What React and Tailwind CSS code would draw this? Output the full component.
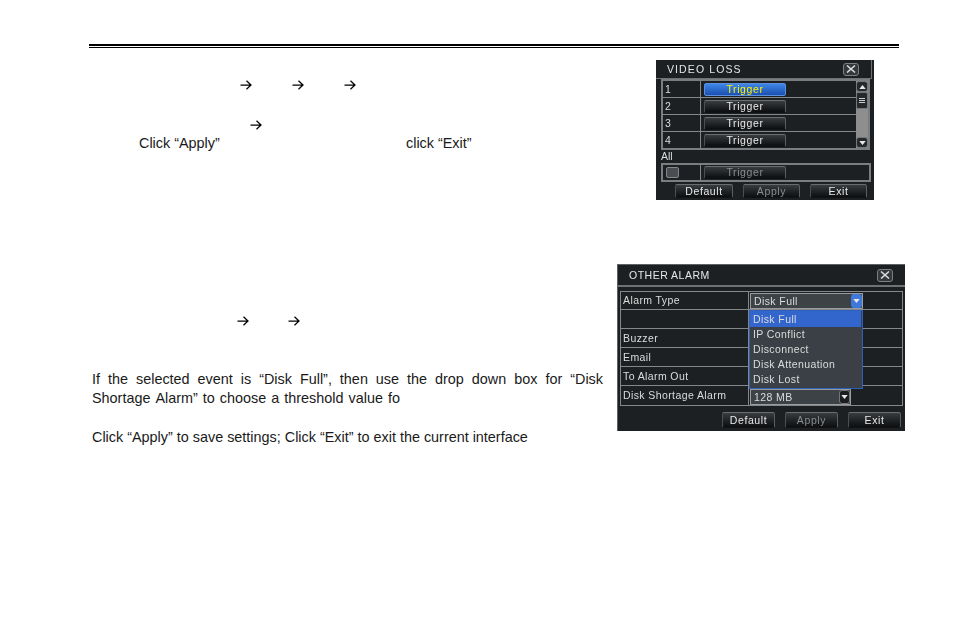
import React from "react";

const Arrow = ({ className }) => (
  <svg viewBox="0 0 12 10" className={`w-[12px] h-[10px] ${className || ""}`} fill="none" stroke="#000" strokeWidth="1.25">
    <path d="M0.5 5H11M6.5 0.8L11 5L6.5 9.2" />
  </svg>
);

const NvrButton = ({ children, active, dim, className }) => (
  <div
    className={`flex items-center justify-center rounded-[2px] border tracking-[0.6px] ${
      active
        ? "border-[#5a8fe0] bg-gradient-to-b from-[#3f86e6] to-[#1c4fb0] text-[#fff200]"
        : "border-t-[#6a6d70] border-l-[#4c4f52] border-r-[#5c5f62] border-b-[#101214] bg-gradient-to-b from-[#3a3d40] to-[#0c0e10]"
    } ${dim ? "text-[#8a8c8e]" : active ? "" : "text-[#e8e8e8]"} ${className || ""}`}
  >
    {children}
  </div>
);

const CloseBtn = () => (
  <div className="w-[16px] h-[13px] flex items-center justify-center border border-[#7d8083] bg-[#35383b] rounded-[3px]">
    <svg viewBox="0 0 10 8" className="w-[10px] h-[8px]" fill="none" stroke="#dcdcdc" strokeWidth="1.5">
      <path d="M1 0.5L9 7.5M9 0.5L1 7.5" />
    </svg>
  </div>
);

const Tri = ({ up }) => (
  <svg viewBox="0 0 8 5" className="w-[7px] h-[4px]">
    <path d={up ? "M0 5L4 0L8 5Z" : "M0 0L4 5L8 0Z"} fill="#e8e8e8" />
  </svg>
);

function VideoLoss() {
  const rows = ["1", "2", "3", "4"];
  return (
    <div className="w-[218px] h-[140px] bg-[#1d2023] text-[#dcdcdc] text-[10.5px] leading-none flex flex-col px-[5px] blur-[0.3px]">
      <div className="h-[19px] flex items-center justify-between pl-[11px] pr-[12px] border-b border-r border-[#6f7275] -ml-[5px] -mr-[3px] shrink-0">
        <span className="tracking-[1.1px] text-[10.5px] text-[#e6e6e6]">VIDEO LOSS</span>
        <CloseBtn />
      </div>
      <div className="h-[71px] w-[209px] border-2 border-[#7b7e81] flex shrink-0">
        <div className="flex-1 flex flex-col">
          {rows.map((r, i) => (
            <div key={r} className={`flex-1 flex items-center ${i < 3 ? "border-b border-[#85888a]" : ""}`}>
              <div className="w-[38px] h-full pl-[2px] flex items-center border-r border-[#85888a]">{r}</div>
              <NvrButton active={i === 0} className="ml-[3px] w-[82px] h-[13px]">Trigger</NvrButton>
            </div>
          ))}
        </div>
        <div className="w-[12px] bg-[#8e8e8e] flex flex-col">
          <div className="h-[11px] bg-[#26292c] border border-[#777] rounded-[3px] flex items-center justify-center"><Tri up /></div>
          <div className="h-[17px] bg-[#26292c] border border-[#777] rounded-[2px] flex flex-col gap-[1px] items-center justify-center">
            <span className="w-[6px] h-px bg-[#ccc]" />
            <span className="w-[6px] h-px bg-[#ccc]" />
            <span className="w-[6px] h-px bg-[#ccc]" />
          </div>
          <div className="h-[11px] mt-auto bg-[#26292c] border border-[#777] rounded-[3px] flex items-center justify-center"><Tri /></div>
        </div>
      </div>
      <div className="h-[13px] flex items-center">All</div>
      <div className="h-[19px] w-[210px] border-2 border-[#7b7e81] flex items-center shrink-0">
        <div className="w-[38px] h-full flex items-center pl-[3px] border-r border-[#85888a]">
          <span className="w-[13px] h-[11px] rounded-[2px] bg-[#4a4e52] border border-[#85888a]" />
        </div>
        <NvrButton dim className="ml-[3px] w-[82px] h-[13px]">Trigger</NvrButton>
      </div>
      <div className="flex mt-[2px] ml-[14px] gap-[10px]">
        <NvrButton className="w-[58px] h-[14px]">Default</NvrButton>
        <NvrButton dim className="w-[57px] h-[14px]">Apply</NvrButton>
        <NvrButton className="w-[57px] h-[14px]">Exit</NvrButton>
      </div>
    </div>
  );
}

function OtherAlarm() {
  const labels = [
    ["Alarm Type", "h-[18px]"],
    ["", "h-[19px]"],
    ["Buzzer", "h-[19px]"],
    ["Email", "h-[19px]"],
    ["To Alarm Out", "h-[19px]"],
    ["Disk Shortage Alarm", "h-[19px]"],
  ];
  return (
    <div className="w-[288px] h-[167px] bg-[#1d2023] text-[#dcdcdc] text-[10.5px] leading-none tracking-[0.4px] flex flex-col pl-[2px] pr-[3px] border-t border-l border-[#5f6265] blur-[0.3px]">
      <div className="h-[22px] -ml-[2px] -mr-[3px] flex items-center justify-between pl-[11px] pr-[12px] border-b-2 border-[#6f7275] shrink-0">
        <span className="tracking-[0.5px] text-[10.5px] text-[#e6e6e6]">OTHER ALARM</span>
        <CloseBtn />
      </div>
      <div className="relative mt-[4px] w-[283px] border border-[#85888a] shrink-0">
        {labels.map(([text, h], i) => (
          <div key={i} className={`${h} flex ${i < 5 ? "border-b border-[#85888a]" : ""}`}>
            <div className="w-[128px] pl-[2px] flex items-center border-r border-[#85888a]">{text}</div>
            {i === 0 && (
              <div className="ml-[1px] w-[113px] h-[16px] self-end bg-[#3c4246] border border-[#9a9da0] pl-[3px] flex items-center justify-between">
                Disk Full
                <span className="w-[11px] h-[14px] rounded-[3px] bg-[#3f78d8] flex items-center justify-center"><Tri /></span>
              </div>
            )}
            {i === 5 && (
              <div className="ml-[1px] w-[101px] h-[16px] self-end bg-[#3c4246] border border-[#9a9da0] pl-[3px] flex items-center justify-between">
                128 MB
                <span className="w-[11px] h-[14px] rounded-[3px] bg-[#1b1d20] border border-[#777] flex items-center justify-center"><Tri /></span>
              </div>
            )}
          </div>
        ))}
        {/* open dropdown over the rows */}
        <div className="absolute left-[128px] top-[18px] w-[114px] h-[79px] bg-[#3a4045] border border-[#2f5fb8] flex flex-col">
          <div className="h-[16px] mr-[1px] bg-[#3366cc] flex items-center pl-[3px]">Disk Full</div>
          {["IP Conflict", "Disconnect", "Disk Attenuation", "Disk Lost"].map((t) => (
            <div key={t} className="h-[15px] flex items-center pl-[3px]">{t}</div>
          ))}
        </div>
      </div>
      <div className="flex mt-[6px] ml-[102px] gap-[10px]">
        <NvrButton className="w-[53px] h-[16px]">Default</NvrButton>
        <NvrButton dim className="w-[53px] h-[16px]">Apply</NvrButton>
        <NvrButton className="w-[53px] h-[16px]">Exit</NvrButton>
      </div>
    </div>
  );
}

export default function App() {
  return (
    <div className="w-[954px] h-[636px] bg-white overflow-hidden font-['Liberation_Sans',Arial,sans-serif] text-[14.4px] leading-[19px] text-[#1a1a1a]">
      <div className="ml-[89px] pt-[44px] w-[810px]">
        <div className="h-[2px] bg-black" />
        <div className="mt-[1px] h-px bg-black" />
      </div>

      <div className="flex">
        <div className="w-[615px] shrink-0">
          <div className="mt-[32px] ml-[240px] flex gap-[40px] h-[10px]">
            <Arrow />
            <Arrow />
            <Arrow />
          </div>
          <div className="mt-[30px] ml-[250px] h-[10px]">
            <Arrow />
          </div>
          <div className="mt-[4px] ml-[139px] flex h-[19px]">
            <span className="w-[267px]">Click “Apply”</span>
            <span>click “Exit”</span>
          </div>
          <div className="mt-[163px] ml-[237px] flex gap-[39px] h-[10px]">
            <Arrow />
            <Arrow />
          </div>
          <div className="mt-[44px] ml-[92px] w-[511px]">
            <p className="[text-align-last:justify] text-justify">
              If the selected event is “Disk Full”, then use the drop down box for “Disk
            </p>
            <p className="flex justify-between w-[308px]">
              {"Shortage Alarm” to choose a threshold value fo".split(" ").map((w, i) => (
                <span key={i}>{w}</span>
              ))}
            </p>
            <p className="mt-[20px] whitespace-nowrap">Click “Apply” to save settings; Click “Exit” to exit the current interface</p>
          </div>
        </div>

        <div className="flex flex-col">
          <div className="mt-[12px] ml-[41px]">
            <VideoLoss />
          </div>
          <div className="mt-[64px] ml-[2px]">
            <OtherAlarm />
          </div>
        </div>
      </div>
    </div>
  );
}
